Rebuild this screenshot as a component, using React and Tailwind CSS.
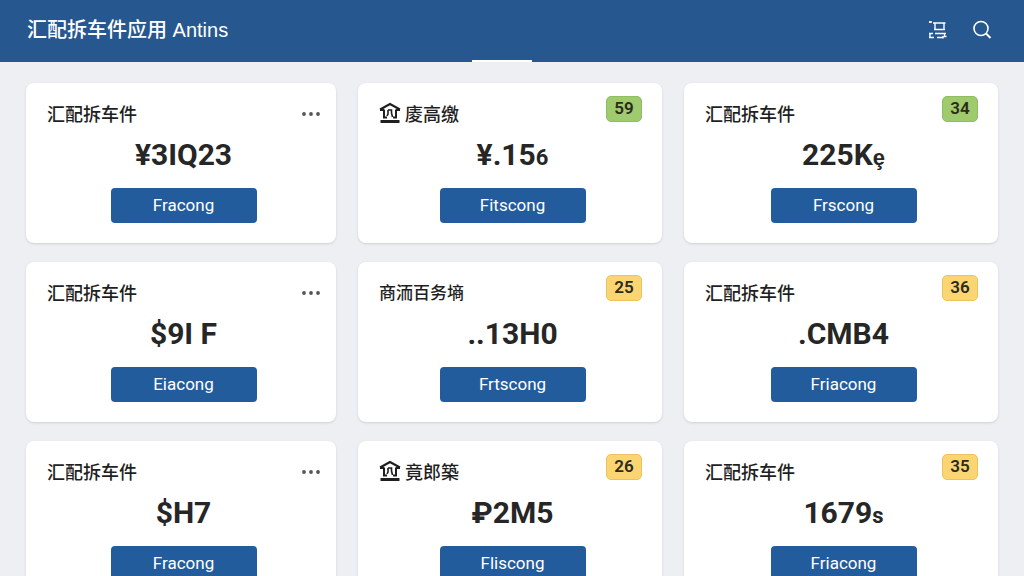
/**
 * PartsDashboard - Top bar plus a grid of price cards
 */
import React from 'react'

const CARDS = [
  { title: '汇配拆车件', price: '¥3IQ23', action: 'Fracong' },
  { title: '庱高缴', icon: true, price: '¥.15', suffix: '6', action: 'Fitscong', badge: '59', tone: 'green' },
  { title: '汇配拆车件', price: '225K', suffix: 'ȩ', action: 'Frscong', badge: '34', tone: 'green' },
  { title: '汇配拆车件', price: '$9I F', action: 'Eiacong' },
  { title: '商洏百务墒', compact: true, price: '..13H0', action: 'Frtscong', badge: '25', tone: 'yellow' },
  { title: '汇配拆车件', price: '.CMB4', action: 'Friacong', badge: '36', tone: 'yellow' },
  { title: '汇配拆车件', price: '$H7', action: 'Fracong' },
  { title: '竟郎築', icon: true, price: '₽2M5', action: 'Fliscong', badge: '26', tone: 'yellow' },
  { title: '汇配拆车件', price: '1679', suffix: 's', action: 'Friacong', badge: '35', tone: 'yellow' },
]

const TONES = {
  green: 'bg-[#9fcb6e] border-[#8fbd5f]',
  yellow: 'bg-[#fcd573] border-[#ecc25c]',
}

function ScanIcon() {
  return (
    <svg width="20" height="20" viewBox="0 0 20 20" fill="none" stroke="currentColor" strokeWidth="1.4" aria-hidden="true">
      <path d="M1 2h3M2 1v2M5 3h12.500M7 3v6M16 3v6M6 9.500h11" />
      <path d="M2 17v-3M1 13.500h4M1 17.500h5M7 13.500h11M9 17.500h6M16.500 13.500v3h2M15 16v2.500" />
    </svg>
  )
}

function SearchIcon() {
  return (
    <svg width="20" height="20" viewBox="0 0 20 20" fill="none" stroke="currentColor" strokeWidth="1.6" aria-hidden="true">
      <circle cx="9" cy="8.500" r="7" />
      <path d="M14 13.500l4.500 4.500" strokeWidth="2" />
    </svg>
  )
}

function HouseIcon() {
  return (
    <svg width="22" height="26" viewBox="0 0 22 26" fill="none" stroke="currentColor" strokeWidth="2" aria-hidden="true">
      <path d="M1 7.500L11 2l10 5.500M1 8h4M17 8h4" />
      <path d="M5 7.500v8M17 7.500v8M4 15.500h4M14 15.500h4" />
      <path d="M9 8h3.500v3l1 4M9 8v4l-1 2" strokeWidth="1.6" />
      <path d="M1.500 19.500h19" strokeWidth="3" />
    </svg>
  )
}

function MoreIcon() {
  return (
    <svg width="18" height="4" viewBox="0 0 18 4" fill="currentColor" aria-hidden="true">
      <circle cx="2" cy="2" r="1.900" />
      <circle cx="9" cy="2" r="1.900" />
      <circle cx="16" cy="2" r="1.900" />
    </svg>
  )
}

function PriceCard({ card }) {
  return (
    <article className="rounded-lg bg-white pt-[13px] pr-5 pb-5 pl-[21px] shadow-sm">
      <div className="flex items-start justify-between">
        <h2
          className={`flex h-[37px] items-center gap-1 font-medium text-[#1f1f1f] ${card.compact ? 'text-[17px]' : 'text-lg'}`}
        >
          {card.icon && <HouseIcon />}
          {card.title}
        </h2>
        {card.badge ? (
          <span
            className={`flex h-[26px] w-9 items-center justify-center rounded-[5px] border font-[Roboto,sans-serif] text-[17px] font-semibold text-[#2b2a1c] ${TONES[card.tone]}`}
          >
            {card.badge}
          </span>
        ) : (
          <button type="button" aria-label="More" className="-mr-1 flex h-9 items-center text-[#555]">
            <MoreIcon />
          </button>
        )}
      </div>

      {/* Price and action */}
      <div className="flex flex-col items-center pl-1 font-[Roboto,sans-serif]">
        <p className="h-11 text-[30px] leading-[44px] font-bold text-[#262626]">
          {card.price}
          {card.suffix && <span className="text-[22px] leading-none">{card.suffix}</span>}
        </p>
        <button
          type="button"
          className="mt-[11px] h-[35px] w-[146px] rounded bg-[#235c9c] text-[17px] text-white hover:bg-[#1d4f88]"
        >
          {card.action}
        </button>
      </div>
    </article>
  )
}

export default function App() {
  return (
    <div className="min-h-screen bg-[#eeeff2] font-['Liberation_Sans','Noto_Sans_CJK_SC',sans-serif]">
      <header className="flex h-[62px] flex-col bg-[#26578f] text-white">
        <div className="flex flex-1 items-center justify-between pr-8 pl-[27px]">
          <h1 className="text-xl font-medium">汇配拆车件应用 Antins</h1>
          <div className="flex items-center gap-6">
            <button type="button" aria-label="Scan"><ScanIcon /></button>
            <button type="button" aria-label="Search"><SearchIcon /></button>
          </div>
        </div>
        {/* Active tab marker */}
        <div className="flex justify-center pr-5">
          <div className="h-[2px] w-[60px] bg-white" />
        </div>
      </header>

      <main className="grid grid-cols-[310fr_304fr_314fr] gap-x-[22px] gap-y-[19px] px-[26px] pt-[21px] pb-6">
        {CARDS.map((card, i) => (
          <PriceCard key={i} card={card} />
        ))}
      </main>
    </div>
  )
}
